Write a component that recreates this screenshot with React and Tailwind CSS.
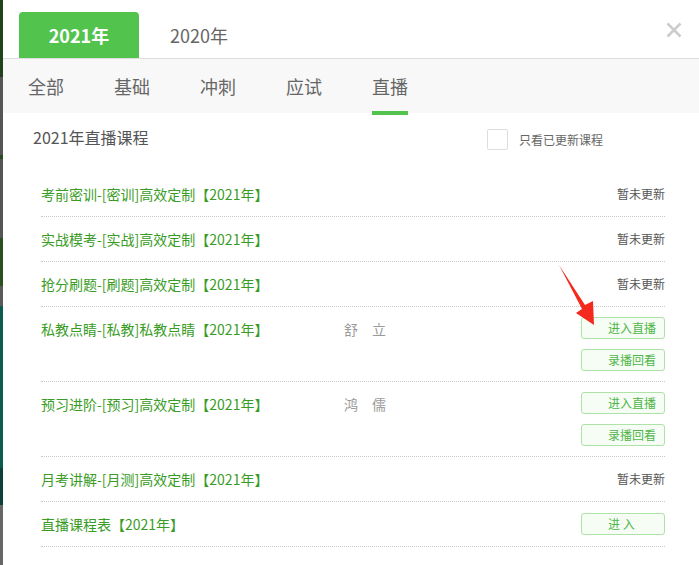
import React from "react";

const font = { fontFamily: '"Noto Sans CJK SC", "Noto Sans", sans-serif' };

const rows = [
  { title: "考前密训-[密训]高效定制【2021年】", type: "none" },
  { title: "实战模考-[实战]高效定制【2021年】", type: "none" },
  { title: "抢分刷题-[刷题]高效定制【2021年】", type: "none" },
  { title: "私教点睛-[私教]私教点睛【2021年】", type: "live", teacher: "舒　立" },
  { title: "预习进阶-[预习]高效定制【2021年】", type: "live", teacher: "鸿　儒" },
  { title: "月考讲解-[月测]高效定制【2021年】", type: "none" },
  { title: "直播课程表【2021年】", type: "enter" },
];

function Btn({ children }) {
  return (
    <div className="h-[22px] w-[84px] rounded-[3px] border border-[#aee3a8] bg-[#f6fdf5] pl-[26px] text-[12px] leading-[20px] text-[#4fb548]">
      {children}
    </div>
  );
}

function Row({ r }) {
  if (r.type === "live") {
    return (
      <div className="flex h-[75px] border-b border-dotted border-[#c8c8c8] pt-[10px]">
        <div className="w-[303px] text-[14px] leading-[24px] text-[#399c25]">{r.title}</div>
        <div className="flex-1 text-[14px] leading-[24px] text-[#999]">{r.teacher}</div>
        <div className="flex flex-col gap-[10px]">
          <Btn>进入直播</Btn>
          <Btn>录播回看</Btn>
        </div>
      </div>
    );
  }
  return (
    <div className="flex h-[45px] items-center border-b border-dotted border-[#c8c8c8]">
      <div className="flex-1 text-[14px] text-[#399c25]">{r.title}</div>
      {r.type === "none" ? (
        <div className="text-[12px] text-[#555]">暂未更新</div>
      ) : (
        <Btn>进&nbsp;入</Btn>
      )}
    </div>
  );
}

export default function App() {
  const navItems = ["全部", "基础", "冲刺", "应试", "直播"];
  return (
    <div className="flex h-[565px] w-[699px] overflow-hidden bg-white" style={font}>
      <div className="flex h-full w-[3px] flex-col">
        <div className="h-[77px] bg-[#22421b]" />
        <div className="h-[78px] bg-[#555]" />
        <div className="h-[4px] bg-[#2a4a20]" />
        <div className="h-[79px] bg-[#555]" />
        <div className="h-[48px] bg-[#2b4f1f]" />
        <div className="h-[20px] bg-[#5a5a5a]" />
        <div className="h-[162px] bg-[#0d5a4f]" />
        <div className="h-[37px] bg-[#0f3f3a]" />
        <div className="flex-1 bg-[#666]" />
      </div>
      <div className="relative flex-1">
        {/* year tabs */}
        <div className="flex h-[59px] items-end border-b border-[#dddddd] pl-[16px]">
          <div className="flex h-[46px] w-[120px] items-center justify-center rounded-t-[4px] bg-[#52c44e] text-[18px] font-bold text-white">
            2021年
          </div>
          <div className="flex h-[46px] w-[120px] items-center justify-center text-[18px] text-[#666]">
            2020年
          </div>
          <div className="flex-1" />
          <div className="mb-[20px] mr-[17px] self-end">
            <svg width="16" height="16" viewBox="0 0 16 16">
              <path d="M1.5 1.5 L14.5 14.5 M14.5 1.5 L1.5 14.5" stroke="#cccccc" strokeWidth="2.6" />
            </svg>
          </div>
        </div>
        {/* category nav */}
        <div className="flex h-[54px] gap-[50px] bg-[#f8f8f8] pl-[25px]">
          {navItems.map((n) => (
            <div key={n} className="relative flex items-center text-[18px] text-[#666]">
              {n}
              {n === "直播" && (
                <div className="absolute bottom-[-2px] left-0 h-[4px] w-full bg-[#52c44e]" />
              )}
            </div>
          ))}
        </div>
        {/* title row */}
        <div className="mt-[16px] flex h-[21px] items-center pl-[30px] pr-[96px]">
          <div className="mb-[5px] flex-1 text-[16px] leading-[20px] text-[#555]">2021年直播课程</div>
          <div className="h-[21px] w-[21px] rounded-[2px] border border-[#dddddd] bg-white" />
          <div className="ml-[11px] text-[12px] text-[#666]">只看已更新课程</div>
        </div>
        {/* course list */}
        <div className="ml-[38px] mr-[34px] mt-[22px] flex flex-col">
          {rows.map((r) => (
            <Row key={r.title} r={r} />
          ))}
        </div>
        {/* red annotation arrow */}
        <svg
          className="pointer-events-none absolute left-0 top-0"
          width="696"
          height="565"
          viewBox="3 0 696 565"
        >
          <polygon
            points="559,265 585,305 593,301 594,325 576,313 582,309"
            fill="#f52a1f"
          />
        </svg>
      </div>
    </div>
  );
}
